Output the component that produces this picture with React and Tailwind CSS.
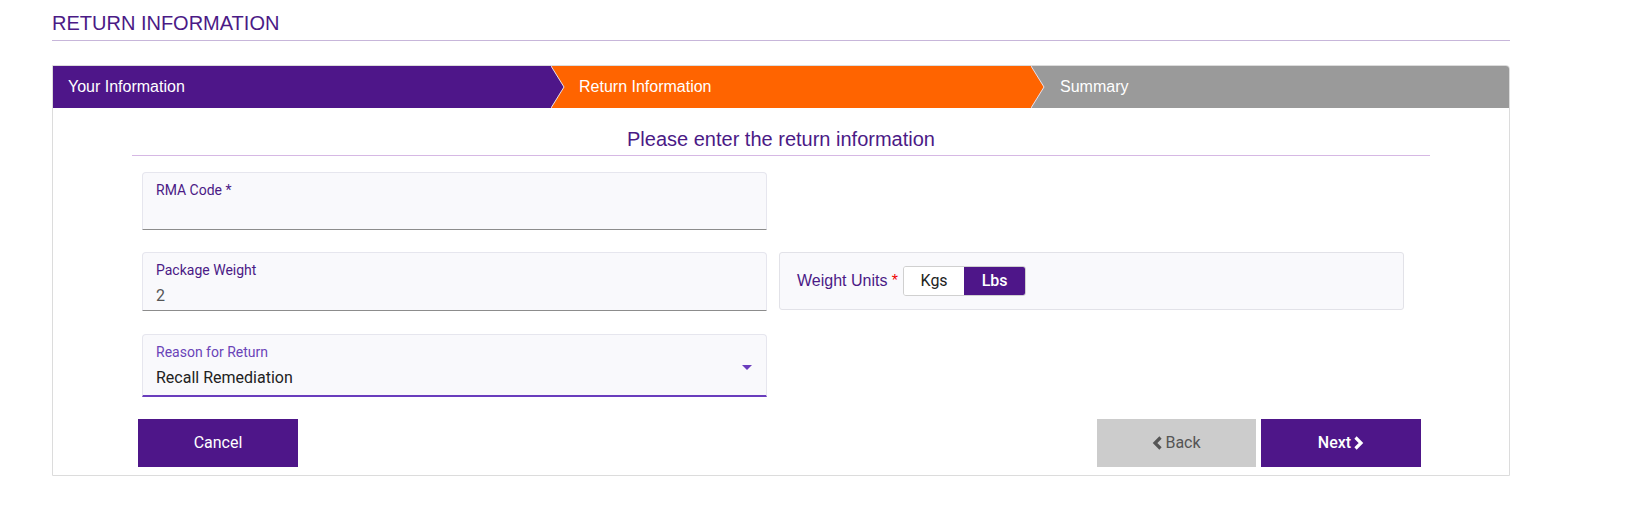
import React from "react";

const arial = { fontFamily: '"Liberation Sans", Arial, sans-serif' };

function Chevron({ fill }) {
  return (
    <svg
      className="absolute top-0 left-full z-10"
      width="14"
      height="42"
      viewBox="0 0 14 42"
    >
      <polygon points="0,0 13,21 0,42" fill={fill} />
      <polyline points="0,0 13,21 0,42" fill="none" stroke="#e6e0ee" strokeWidth="1" />
    </svg>
  );
}

function ChevIcon({ dir }) {
  return (
    <svg width="11" height="14" viewBox="0 0 11 14">
      <polyline
        points={dir === "left" ? "8.5,1.5 3,7 8.5,12.5" : "2.5,1.5 8,7 2.5,12.5"}
        fill="none"
        stroke="currentColor"
        strokeWidth="3.2"
        strokeLinejoin="miter"
      />
    </svg>
  );
}

function Field({ label, value, h, labelColor = "text-[#4b1a86]", focused = false, select = false }) {
  return (
    <div
      className={`relative rounded-t-[4px] border border-[#e6e6ee] bg-[#f9f9fc] pl-[13px] pt-[9px] ${
        focused ? "border-b-2 border-b-[#6a3dbd]" : "border-b-[#8c8c8c]"
      } ${h}`}
    >
      <div className={`text-[14px] leading-[16px] ${labelColor}`}>{label}</div>
      {value !== undefined && (
        <div className={`mt-[8px] text-[16px] leading-[20px] ${select ? "text-[#222]" : "text-[#555]"}`}>{value}</div>
      )}
      {select && (
        <svg className="absolute right-[14px] top-[30px]" width="10" height="5" viewBox="0 0 10 5">
          <polygon points="0,0 10,0 5,5" fill="#6a3dbd" />
        </svg>
      )}
    </div>
  );
}

export default function App() {
  return (
    <div className="min-h-[518px] bg-white" style={{ fontFamily: "Roboto, sans-serif" }}>
      <div className="ml-[52px] w-[1458px]">
        <div
          className="border-b border-[#c7b6da] pt-[12px] pb-[5px] text-[20px] leading-[23px] text-[#4b1a86]"
          style={arial}
        >
          RETURN INFORMATION
        </div>

        <div className="mt-[24px] rounded-tr-[4px] border border-[#dcdcdc] pb-[8px]">
          <div className="flex h-[42px] text-[16px] text-white" style={arial}>
            <div className="relative flex w-[498px] items-center bg-[#4e1689] pl-[15px]">
              Your Information
              <Chevron fill="#4e1689" />
            </div>
            <div className="relative flex w-[480px] items-center bg-[#ff6400] pl-[28px]">
              Return Information
              <Chevron fill="#ff6400" />
            </div>
            <div className="flex flex-1 items-center rounded-tr-[3px] bg-[#9a9a9a] pl-[29px]">Summary</div>
          </div>

          <div
            className="mx-auto mt-[20px] w-[1298px] border-b border-[#d6b8e4] pb-[4px] text-center text-[20px] leading-[23px] text-[#4b1a86]"
            style={arial}
          >
            Please enter the return information
          </div>

          <div className="ml-[89px] mt-[16px] grid w-[1262px] grid-cols-2 gap-x-[12px]">
            <Field label="RMA Code *" h="h-[58px]" />
            <div />

            <div className="mt-[22px]">
              <Field label="Package Weight" value="2" h="h-[59px]" />
            </div>
            <div className="mt-[22px] flex h-[58px] items-center rounded-[3px] border border-[#e2e2e8] bg-[#f9f9fc] pl-[17px]">
              <span className="text-[16px] text-[#4b1a86]" style={arial}>
                Weight Units <span className="text-[#e00]">*</span>
              </span>
              <div className="ml-[5px] flex h-[30px] overflow-hidden rounded-[3px] border border-[#d0d0d0] text-[16px]">
                <div className="flex w-[60px] items-center justify-center bg-white text-[#222]">Kgs</div>
                <div className="flex w-[61px] items-center justify-center bg-[#4e1689] font-medium text-white">Lbs</div>
              </div>
            </div>

            <div className="mt-[23px]">
              <Field
                label="Reason for Return"
                value="Recall Remediation"
                h="h-[63px]"
                labelColor="text-[#6a44b8]"
                focused
                select
              />
            </div>
            <div />
          </div>

          <div className="ml-[85px] mt-[22px] flex w-[1283px] items-center text-[16px]">
            <button className="h-[48px] w-[160px] bg-[#4e1689] text-white">Cancel</button>
            <div className="ml-auto flex gap-[5px]">
              <button className="flex h-[48px] w-[159px] items-center justify-center gap-[2px] bg-[#cccccc] text-[#555]">
                <ChevIcon dir="left" />
                Back
              </button>
              <button className="flex h-[48px] w-[160px] items-center justify-center gap-[2px] bg-[#4e1689] font-medium text-white">
                Next
                <ChevIcon dir="right" />
              </button>
            </div>
          </div>
        </div>
      </div>
    </div>
  );
}
